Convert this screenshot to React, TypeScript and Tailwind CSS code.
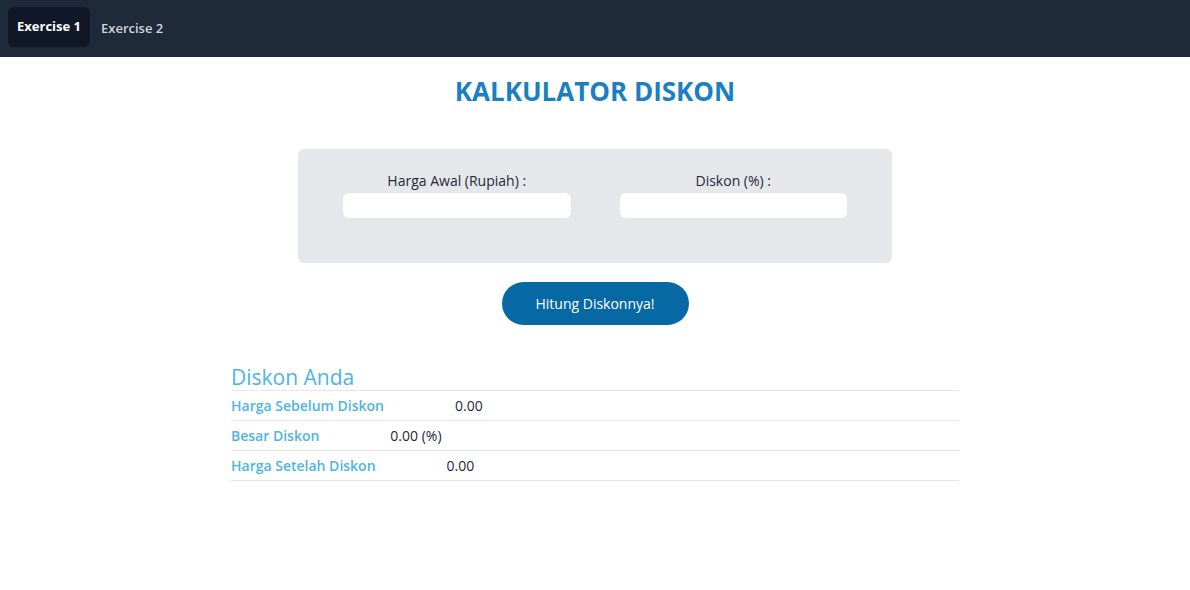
const ROWS = [
  { label: 'Harga Sebelum Diskon', value: '0.00' },
  { label: 'Besar Diskon', value: '0.00 (%)' },
  { label: 'Harga Setelah Diskon', value: '0.00' },
];

const App = () => {
  return (
    <div className="min-h-screen bg-white font-['Open_Sans',sans-serif]">
      <nav className="flex h-[57px] items-center gap-[11px] bg-gray-800 px-2">
        <a className="-mt-[3px] rounded-md bg-gray-900 px-[9px] py-[10px] text-[13px] font-bold text-white">
          Exercise 1
        </a>
        <a className="pt-[1px] text-[13px] font-semibold text-gray-300">Exercise 2</a>
      </nav>

      <h1 className="mt-[15px] text-center text-[26px] font-bold text-[#1b7fc3]">
        KALKULATOR DISKON
      </h1>

      <div className="mx-auto mt-[38px] w-[594px] rounded-md bg-gray-200 px-[45px] pt-[21px] pb-[45px]">
        <div className="grid grid-cols-2 gap-[49px]">
          <div className="flex flex-col items-center">
            <label className="text-[14px] text-gray-800">Harga Awal (Rupiah) :</label>
            <input className="mt-[2px] h-[25px] w-full rounded-md bg-white px-2 text-sm outline-none" />
          </div>
          <div className="flex flex-col items-center">
            <label className="text-[14px] text-gray-800">Diskon (%) :</label>
            <input className="mt-[2px] h-[25px] w-full rounded-md bg-white px-2 text-sm outline-none" />
          </div>
        </div>
      </div>

      <div className="mt-[19px] flex justify-center">
        <button className="h-[43px] w-[187px] rounded-full bg-[#0769a3] text-[14px] text-white">
          Hitung Diskonnya!
        </button>
      </div>

      <div className="mx-auto mt-[40px] w-[728px]">
        <h2 className="border-b border-gray-200 pb-[1px] text-[21px] leading-[24px] font-medium text-[#4db5e6]">
          Diskon Anda
        </h2>
        {ROWS.map((row) => (
          <div
            key={row.label}
            className="flex h-[30px] items-center gap-[71px] border-b border-gray-200 text-[14px]"
          >
            <span className="font-semibold text-[#4db5e6]">{row.label}</span>
            <span className="text-gray-800">{row.value}</span>
          </div>
        ))}
      </div>
    </div>
  );
};

export default App;
